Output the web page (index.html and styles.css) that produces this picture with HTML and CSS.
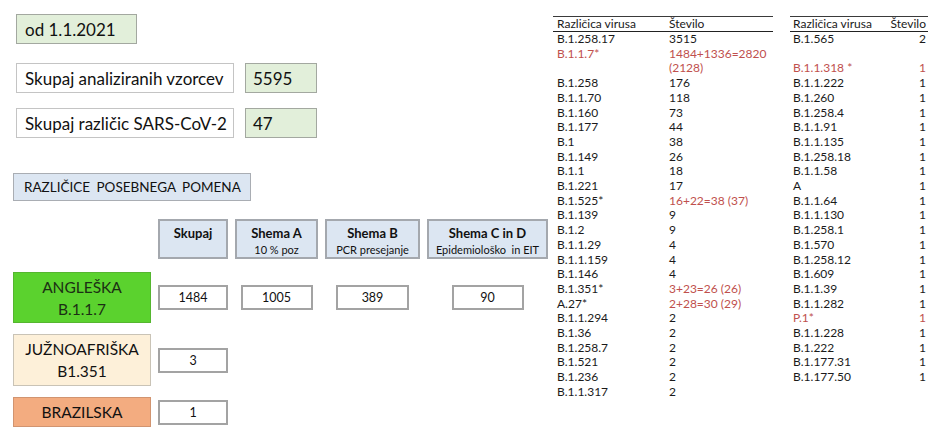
FILE: index.html
```html
<!DOCTYPE html>
<html lang="sl">
<head>
<meta charset="utf-8">
<title>Različice SARS-CoV-2</title>
<link rel="stylesheet" href="styles.css">
</head>
<body>
<div class="page">
  <section class="left">
    <div class="box green od">od 1.1.2021</div>
    <div class="stat">
      <div class="box label">Skupaj analiziranih vzorcev</div>
      <div class="box green value">5595</div>
    </div>
    <div class="stat stat2">
      <div class="box label">Skupaj različic SARS-CoV-2</div>
      <div class="box green value">47</div>
    </div>
    <div class="title">RAZLIČICE POSEBNEGA POMENA</div>
    <div class="grid">
      <div class="spacer"></div>
      <div class="head"><b>Skupaj</b></div>
      <div class="head"><b>Shema A</b><span>10 % poz</span></div>
      <div class="head"><b>Shema B</b><span>PCR presejanje</span></div>
      <div class="head"><b>Shema C in D</b><span>Epidemiološko &nbsp;in EIT</span></div>

      <div class="variant uk">ANGLEŠKA<br>B.1.1.7</div>
      <div class="num"><div class="val">1484</div></div>
      <div class="num"><div class="val w72">1005</div></div>
      <div class="num"><div class="val w73">389</div></div>
      <div class="num"><div class="val w72">90</div></div>

      <div class="variant sa">JUŽNOAFRIŠKA<br>B1.351</div>
      <div class="num"><div class="val">3</div></div>
      <div></div><div></div><div></div>

      <div class="variant br">BRAZILSKA</div>
      <div class="num"><div class="val">1</div></div>
      <div></div><div></div><div></div>
    </div>
  </section>

  <table class="tbl t1">
    <thead><tr><th>Različica virusa</th><th>Število</th></tr></thead>
    <tbody>
      <tr><td>B.1.258.17</td><td>3515</td></tr>
      <tr class="red"><td>B.1.1.7*</td><td>1484+1336=2820<br>(2128)</td></tr>
      <tr><td>B.1.258</td><td>176</td></tr>
      <tr><td>B.1.1.70</td><td>118</td></tr>
      <tr><td>B.1.160</td><td>73</td></tr>
      <tr><td>B.1.177</td><td>44</td></tr>
      <tr><td>B.1</td><td>38</td></tr>
      <tr><td>B.1.149</td><td>26</td></tr>
      <tr><td>B.1.1</td><td>18</td></tr>
      <tr><td>B.1.221</td><td>17</td></tr>
      <tr><td>B.1.525*</td><td class="redc">16+22=38 (37)</td></tr>
      <tr><td>B.1.139</td><td>9</td></tr>
      <tr><td>B.1.2</td><td>9</td></tr>
      <tr><td>B.1.1.29</td><td>4</td></tr>
      <tr><td>B.1.1.159</td><td>4</td></tr>
      <tr><td>B.1.146</td><td>4</td></tr>
      <tr><td>B.1.351*</td><td class="redc">3+23=26 (26)</td></tr>
      <tr><td>A.27*</td><td class="redc">2+28=30 (29)</td></tr>
      <tr><td>B.1.1.294</td><td>2</td></tr>
      <tr><td>B.1.36</td><td>2</td></tr>
      <tr><td>B.1.258.7</td><td>2</td></tr>
      <tr><td>B.1.521</td><td>2</td></tr>
      <tr><td>B.1.236</td><td>2</td></tr>
      <tr><td>B.1.1.317</td><td>2</td></tr>
    </tbody>
  </table>

  <table class="tbl t2">
    <thead><tr><th>Različica virusa</th><th>Število</th></tr></thead>
    <tbody>
      <tr><td>B.1.565</td><td>2</td></tr>
      <tr><td>&nbsp;</td><td></td></tr>
      <tr class="red"><td>B.1.1.318 *</td><td>1</td></tr>
      <tr><td>B.1.1.222</td><td>1</td></tr>
      <tr><td>B.1.260</td><td>1</td></tr>
      <tr><td>B.1.258.4</td><td>1</td></tr>
      <tr><td>B.1.1.91</td><td>1</td></tr>
      <tr><td>B.1.1.135</td><td>1</td></tr>
      <tr><td>B.1.258.18</td><td>1</td></tr>
      <tr><td>B.1.1.58</td><td>1</td></tr>
      <tr><td>A</td><td>1</td></tr>
      <tr><td>B.1.1.64</td><td>1</td></tr>
      <tr><td>B.1.1.130</td><td>1</td></tr>
      <tr><td>B.1.258.1</td><td>1</td></tr>
      <tr><td>B.1.570</td><td>1</td></tr>
      <tr><td>B.1.258.12</td><td>1</td></tr>
      <tr><td>B.1.609</td><td>1</td></tr>
      <tr><td>B.1.1.39</td><td>1</td></tr>
      <tr><td>B.1.1.282</td><td>1</td></tr>
      <tr class="red"><td>P.1*</td><td>1</td></tr>
      <tr><td>B.1.1.228</td><td>1</td></tr>
      <tr><td>B.1.222</td><td>1</td></tr>
      <tr><td>B.1.177.31</td><td>1</td></tr>
      <tr><td>B.1.177.50</td><td>1</td></tr>
    </tbody>
  </table>
</div>
</body>
</html>
```
FILE: styles.css
```css
* { box-sizing: border-box; }
html, body { margin: 0; padding: 0; background: #fff; }
body {
  font-family: Lato, "Open Sans", "Liberation Sans", sans-serif;
  color: #111;
  width: 943px;
  height: 433px;
  overflow: hidden;
}
.page {
  display: flex;
  align-items: flex-start;
}
.left {
  width: 553px;
  padding-left: 13px;
  flex: none;
}
.box {
  display: flex;
  align-items: center;
  height: 30px;
  font-size: 17px;
  border: 1px solid #c4c4c4;
  white-space: nowrap;
}
.green {
  background: #e2efda;
  border-color: #a3a8a0;
}
.od {
  margin: 14px 0 0 3px;
  width: 121px;
  padding-left: 8px;
}
.stat {
  display: flex;
  gap: 11px;
  margin: 19px 0 0 3px;
}
.stat2 { margin-top: 15px; }
.label {
  width: 218px;
  padding-left: 8px;
  background: #fff;
}
.value {
  width: 72px;
  padding-left: 7px;
}
.title {
  margin-top: 35px;
  width: 238px;
  height: 28px;
  display: flex;
  align-items: center;
  padding-left: 10px;
  font-size: 13.5px;
  word-spacing: 3px;
  white-space: nowrap;
  background: #dce6f2;
  border: 1px solid #a9adb3;
}
.grid {
  margin-top: 18px;
  display: grid;
  grid-template-columns: 138px 70px 83px 95px 121px;
  grid-template-rows: 42px 51px 52px 30px;
  column-gap: 7px;
  row-gap: 11px;
}
.head {
  align-self: start;
  height: 40px;
  background: #dce6f2;
  border: 2px solid #a4a8ae;
  display: flex;
  flex-direction: column;
  align-items: center;
  padding-top: 4px;
  line-height: 16px;
}
.head b { font-size: 13px; font-weight: 700; }
.head span { font-size: 11px; margin-top: 1px; }
.variant {
  display: flex;
  align-items: center;
  justify-content: center;
  text-align: center;
  font-size: 15.5px;
  line-height: 22px;
  border: 1px solid #b9b9b9;
}
.uk { background: #5bd22e; color: #1b2f14; border-color: #55b62f; }
.sa { background: #fdf0d9; border-color: #c9c3b6; }
.br { background: #f3ac80; border-color: #d19470; }
.num {
  display: flex;
  align-items: center;
  justify-content: center;
}
.val {
  width: 70px;
  height: 25px;
  border: 2px solid #a3a3a3;
  background: #fff;
  display: flex;
  align-items: center;
  justify-content: center;
  font-size: 12.5px;
}
.val.w72 { width: 72px; }
.val.w73 { width: 73px; }

.tbl {
  border-collapse: collapse;
  margin-top: 16px;
  font-size: 12px;
  color: #1a1a1a;
  flex: none;
}
.tbl th, .tbl td {
  padding: 0;
  line-height: 14.7px;
  font-weight: 400;
  text-align: left;
  vertical-align: top;
  white-space: nowrap;
}
.tbl thead th {
  border-top: 1px solid #3a3a3a;
  border-bottom: 1px solid #222;
  line-height: 14px;
}
.t1 { width: 220px; }
.t1 th:first-child, .t1 td:first-child { width: 116px; padding-left: 4px; }
.t2 { width: 138px; margin-left: 17px; }
.t2 th:first-child, .t2 td:first-child { padding-left: 3px; }
.t2 th:last-child, .t2 td:last-child { text-align: right; padding-right: 2px; }
.red td, .redc { color: #c0504d; }
```
